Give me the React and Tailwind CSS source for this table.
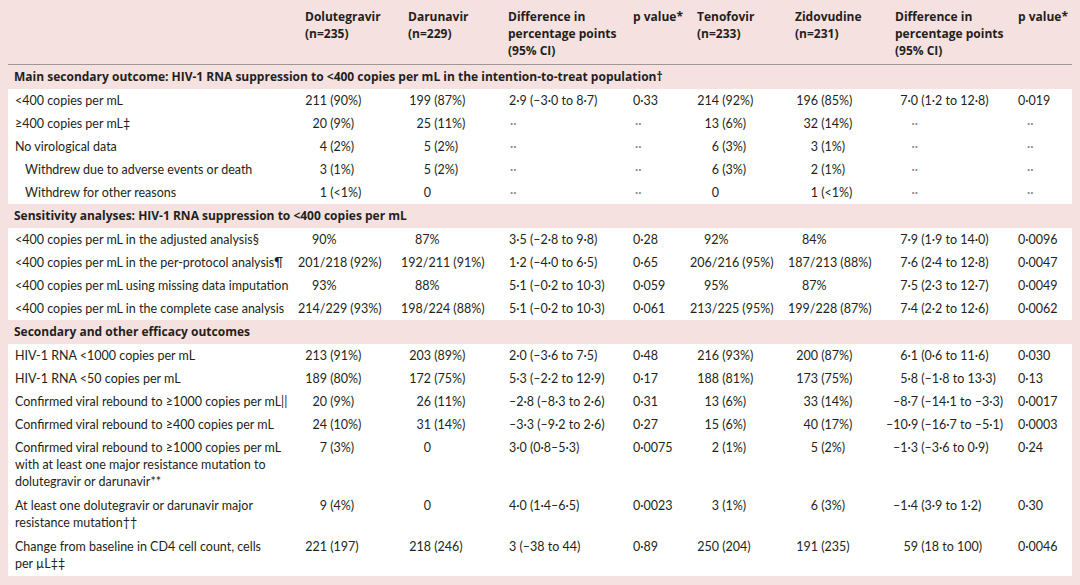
import React from 'react';

const grid = 'grid grid-cols-[297px_103px_100px_125px_64px_98px_100px_123px_1fr]';

const sections = [
  {
    title: 'Main secondary outcome: HIV-1 RNA suppression to <400 copies per mL in the intention-to-treat population†',
    rows: [
      ['<400 copies per mL', '211 (90%)', '199 (87%)', '2·9 (–3·0 to 8·7)', '0·33', '214 (92%)', '196 (85%)', '7·0 (1·2 to 12·8)', '0·019'],
      ['≥400 copies per mL‡', '20 (9%)', '25 (11%)', '··', '··', '13 (6%)', '32 (14%)', '··', '··'],
      ['No virological data', '4 (2%)', '5 (2%)', '··', '··', '6 (3%)', '3 (1%)', '··', '··'],
      ['Withdrew due to adverse events or death', '3 (1%)', '5 (2%)', '··', '··', '6 (3%)', '2 (1%)', '··', '··', true],
      ['Withdrew for other reasons', '1 (<1%)', '0', '··', '··', '0', '1 (<1%)', '··', '··', true],
    ],
  },
  {
    title: 'Sensitivity analyses: HIV-1 RNA suppression to <400 copies per mL',
    rows: [
      ['<400 copies per mL in the adjusted analysis§', '90%', '87%', '3·5 (–2·8 to 9·8)', '0·28', '92%', '84%', '7·9 (1·9 to 14·0)', '0·0096'],
      ['<400 copies per mL in the per-protocol analysis¶', '201/218 (92%)', '192/211 (91%)', '1·2 (–4·0 to 6·5)', '0·65', '206/216 (95%)', '187/213 (88%)', '7·6 (2·4 to 12·8)', '0·0047'],
      ['<400 copies per mL using missing data imputation', '93%', '88%', '5·1 (–0·2 to 10·3)', '0·059', '95%', '87%', '7·5 (2·3 to 12·7)', '0·0049'],
      ['<400 copies per mL in the complete case analysis', '214/229 (93%)', '198/224 (88%)', '5·1 (–0·2 to 10·3)', '0·061', '213/225 (95%)', '199/228 (87%)', '7·4 (2·2 to 12·6)', '0·0062'],
    ],
  },
  {
    title: 'Secondary and other efficacy outcomes',
    rows: [
      ['HIV-1 RNA <1000 copies per mL', '213 (91%)', '203 (89%)', '2·0 (–3·6 to 7·5)', '0·48', '216 (93%)', '200 (87%)', '6·1 (0·6 to 11·6)', '0·030'],
      ['HIV-1 RNA <50 copies per mL', '189 (80%)', '172 (75%)', '5·3 (–2·2 to 12·9)', '0·17', '188 (81%)', '173 (75%)', '5·8 (–1·8 to 13·3)', '0·13'],
      ['Confirmed viral rebound to ≥1000 copies per mL||', '20 (9%)', '26 (11%)', '–2·8 (–8·3 to 2·6)', '0·31', '13 (6%)', '33 (14%)', '–8·7 (–14·1 to –3·3)', '0·0017'],
      ['Confirmed viral rebound to ≥400 copies per mL', '24 (10%)', '31 (14%)', '–3·3 (–9·2 to 2·6)', '0·27', '15 (6%)', '40 (17%)', '–10·9 (–16·7 to –5·1)', '0·0003'],
      [['Confirmed viral rebound to ≥1000 copies per mL', 'with at least one major resistance mutation to', 'dolutegravir or darunavir**'], '7 (3%)', '0', '3·0 (0·8–5·3)', '0·0075', '2 (1%)', '5 (2%)', '–1·3 (–3·6 to 0·9)', '0·24'],
      [['At least one dolutegravir or darunavir major', 'resistance mutation††'], '9 (4%)', '0', '4·0 (1·4–6·5)', '0·0023', '3 (1%)', '6 (3%)', '–1·4 (3·9 to 1·2)', '0·30'],
      [['Change from baseline in CD4 cell count, cells', 'per µL‡‡'], '221 (197)', '218 (246)', '3 (–38 to 44)', '0·89', '250 (204)', '191 (235)', '59 (18 to 100)', '0·0046'],
    ],
  },
];

const Dots = () => <span className="text-[#8a8080]">··</span>;

// split "211 (90%)" into "211" and " (90%)"
function split(v) {
  const i = v.indexOf(' (');
  return i < 0 ? [v, ''] : [v.slice(0, i), v.slice(i)];
}

// count columns: numbers line up on the opening bracket
function Count({ v, box }) {
  if (v.includes('/')) return <div className="-ml-[7px] whitespace-nowrap">{v}</div>;
  if (v.endsWith('%') && !v.includes('(')) return <div className="ml-[7px]">{v}</div>;
  const [a, b] = split(v);
  return (
    <div className="whitespace-nowrap">
      <span className={`inline-block text-right ${box}`}>{a}</span>
      {b}
    </div>
  );
}

function Diff2({ v }) {
  const [a, b] = split(v);
  return (
    <div className="-ml-[9px] whitespace-nowrap">
      <span className="inline-block w-[32px] text-right">{a === '··' ? <Dots /> : a}</span>
      {b}
    </div>
  );
}

function Row({ r }) {
  const [label, d1, d2, diff, p, t1, t2, diff2, p2, indent] = r;
  const lines = Array.isArray(label) ? label : [label];
  return (
    <div className={`${grid} pt-[3px] leading-[17px] ${lines.length > 1 ? 'pb-[4px]' : 'pb-[3px]'}`}>
      <div className={`whitespace-nowrap ${indent ? 'pl-[17px]' : 'pl-[7px]'}`}>
        {lines.map((l, i) => (
          <div key={i}>{l}</div>
        ))}
      </div>
      <Count v={d1} box="w-[22px]" />
      <Count v={d2} box="w-[23px]" />
      <div className="pl-[1px] whitespace-nowrap">{diff === '··' ? <span className="pl-[1px]"><Dots /></span> : diff}</div>
      <div>{p === '··' ? <span className="pl-[2px]"><Dots /></span> : p}</div>
      <Count v={t1} box="w-[22px]" />
      <Count v={t2} box="w-[23px]" />
      <Diff2 v={diff2} />
      <div>{p2 === '··' ? <span className="pl-[9px]"><Dots /></span> : p2}</div>
    </div>
  );
}

function HeadCell({ lines }) {
  return (
    <div className="whitespace-nowrap">
      {lines.map((l, i) => (
        <div key={i}>{l}</div>
      ))}
    </div>
  );
}

export default function App() {
  return (
    <div className="min-h-screen bg-[#f5e1df] px-[8px] font-[Lato,sans-serif] text-[12.5px] text-[#231f20]">
      {/* column heads */}
      <div className={`${grid} border-b border-[#a19696] pt-[8px] pb-[5px] font-['Open_Sans',sans-serif] text-[12px] font-bold leading-[17px]`}>
        <div />
        <HeadCell lines={['Dolutegravir', '(n=235)']} />
        <HeadCell lines={['Darunavir', '(n=229)']} />
        <HeadCell lines={['Difference in', 'percentage points', '(95% CI)']} />
        <HeadCell lines={['p value*']} />
        <HeadCell lines={['Tenofovir', '(n=233)']} />
        <HeadCell lines={['Zidovudine', '(n=231)']} />
        <HeadCell lines={['Difference in', 'percentage points', '(95% CI)']} />
        <HeadCell lines={['p value*']} />
      </div>

      {sections.map((s) => (
        <div key={s.title}>
          <div className="flex h-[24px] items-center pl-[6px] font-['Open_Sans',sans-serif] text-[12px] font-bold whitespace-nowrap">
            {s.title}
          </div>
          <div className="bg-white">
            {s.rows.map((r, i) => (
              <Row key={i} r={r} />
            ))}
          </div>
        </div>
      ))}
    </div>
  );
}
